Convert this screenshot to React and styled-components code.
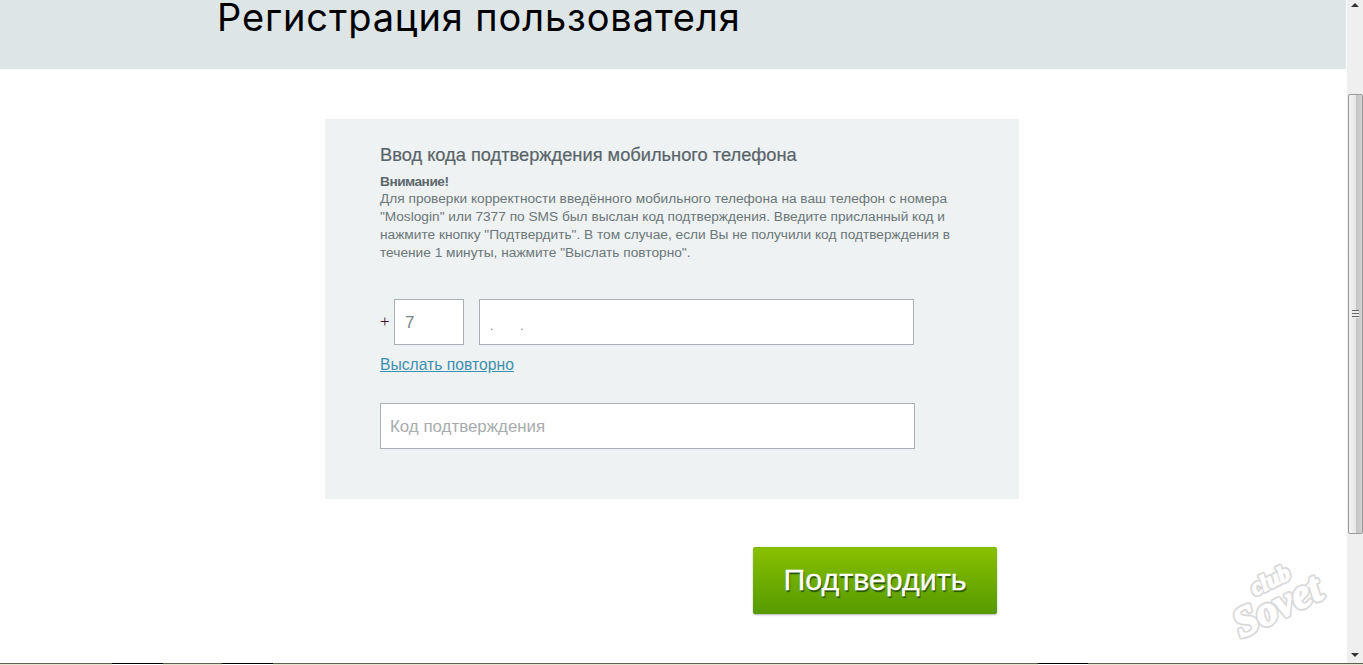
import styled, { createGlobalStyle } from "styled-components";

const GlobalStyle = createGlobalStyle`
  html, body {
    margin: 0;
    padding: 0;
    height: 665px;
    overflow: hidden;
    background: #fff;
    font-family: "Liberation Sans", Arial, sans-serif;
  }
`
const Screen = styled.div`
  width: 1363px;
  height: 665px;
  display: flex;
  flex-direction: column;
  overflow: hidden;
  position: relative;
`
const Main = styled.div`
  flex: 1;
  min-height: 0;
  display: flex;
`
const Page = styled.div`
  flex: 1;
  min-width: 0;
`
const Header = styled.div`
  height: 69px;
  margin-right: 1px;
  background: #dee5e7;
  padding-left: 217px;
  box-sizing: border-box;
`
const Title = styled.h1`
  margin: 0;
  font-family: Inter, sans-serif;
  font-weight: 400;
  font-size: 38px;
  line-height: 34px;
  letter-spacing: 0.88px;
  color: #000;
`
const Panel = styled.div`
  width: 694px;
  height: 380px;
  margin: 50px 0 0 325px;
  padding: 26px 55px 0;
  box-sizing: border-box;
  background: #eef2f3;
`
const PanelTitle = styled.h2`
  margin: 0;
  font-size: 18.25px;
  line-height: 20px;
  font-weight: 400;
  color: #596469;
  -webkit-text-stroke: 0.2px #596469;
`
const Note = styled.div`
  margin-top: 8px;
  width: 590px;
  font-size: 13.7px;
  line-height: 18px;
  color: #6c7679;
`
const Attention = styled.div`
  font-weight: 700;
  line-height: 17px;
  letter-spacing: -0.5px;
  color: #5d686c;
`
const PhoneRow = styled.div`
  display: flex;
  align-items: center;
  margin-top: 37px;
`
const Plus = styled.span`
  width: 14px;
  font-family: "Liberation Serif", serif;
  font-size: 17px;
  color: #3c1028;
`
const Field = styled.div`
  height: 46px;
  width: ${p => p.$width}px;
  margin-left: ${p => p.$gap || 0}px;
  padding: 2px 0 0 ${p => p.$pad || 10}px;
  box-sizing: border-box;
  display: flex;
  align-items: center;
  background: #fff;
  border: 1px solid #a9afb5;
  font-size: ${p => p.$size || 17}px;
  color: ${p => p.$color || "#7b8388"};
`
const Dots = styled.span`
  display: flex;
  gap: 27px;
  font-size: 12px;
  margin-top: 5px;
`
const Resend = styled.a`
  display: block;
  width: fit-content;
  margin-top: 11px;
  font-size: 15.7px;
  line-height: 18px;
  color: #3d8fae;
  text-decoration: underline;
`
const CodeBox = styled.div`
  margin-top: 29px;
`
const Actions = styled.div`
  margin: 48px 0 0 753px;
`
const Button = styled.button`
  display: block;
  width: 244px;
  height: 67px;
  padding: 0 0 4px;
  border: 0;
  border-top: 1px solid #79b800;
  border-radius: 2px;
  background: linear-gradient(#88bf00, #559a00);
  box-shadow: 0 1px 2px rgba(0, 0, 0, 0.3);
  font-family: "Liberation Sans", Arial, sans-serif;
  font-size: 30.4px;
  color: #fff;
  -webkit-text-stroke: 0.3px #fff;
  text-shadow: 1px 2px 1px rgba(20, 60, 0, 0.8);
`
const Scrollbar = styled.div`
  width: 16px;
  display: flex;
  flex-direction: column;
  align-items: center;
  background: #efefef;
`
const Arrow = styled.div`
  width: 0;
  height: 0;
  margin: ${p => p.$up ? "3px 0 0" : "auto 0 6px"};
  border-left: 4px solid transparent;
  border-right: 4px solid transparent;
  ${p => p.$up ? "border-bottom: 4px solid #333;" : "border-top: 4px solid #333;"}
`
const Thumb = styled.div`
  width: 15px;
  height: 440px;
  margin-top: 87px;
  box-sizing: border-box;
  display: flex;
  align-items: center;
  justify-content: center;
  border: 1px solid #9a9a9a;
  border-radius: 2px;
  background: linear-gradient(90deg, #f4f4f4, #e6e6e6 50%, #c4c4c4 55%, #d2d2d2);
`
const Grip = styled.div`
  width: 7px;
  height: 8px;
  background: repeating-linear-gradient(#666 0 1px, #ececec 1px 3px);
`
const Taskbar = styled.div`
  height: 2px;
  flex: none;
  display: flex;
  box-sizing: border-box;
  border-top: 1px solid #5f5f50;
  background: #e6e4cf;
`
const Tab = styled.div`
  box-sizing: content-box;
  height: 1px;
  width: ${p => p.$width}px;
  margin: -1px 0 0 ${p => p.$left}px;
  border-top: 1px solid #000;
  background: #fff;
`
const Watermark = styled.svg`
  position: absolute;
  left: 1218px;
  top: 545px;
`
const WatermarkOutline = styled.g`
  font-family: "Liberation Serif", serif;
  font-style: italic;
  font-weight: 700;
  fill: #d9d9d9;
  stroke: #d9d9d9;
  stroke-width: 5px;
  stroke-linejoin: round;
`
const WatermarkFill = styled(WatermarkOutline)`
  fill: #fff;
  stroke: #fff;
  stroke-width: 1.4px;
`
const Logo = () => (
    <Watermark width="125" height="105" viewBox="0 0 125 105">
        <g transform="rotate(-26 62 52)">
            <WatermarkOutline>
                <text x="40" y="40" fontSize="23">club</text>
                <text x="9" y="72" fontSize="42">Sovet</text>
            </WatermarkOutline>
            <WatermarkFill>
                <text x="40" y="40" fontSize="23">club</text>
                <text x="9" y="72" fontSize="42">Sovet</text>
            </WatermarkFill>
        </g>
    </Watermark>
)

const App = () => {
    return (
        <Screen>
            <GlobalStyle/>
            <Main>
                <Page>
                    <Header>
                        <Title>Регистрация пользователя</Title>
                    </Header>
                    <Panel>
                        <PanelTitle>Ввод кода подтверждения мобильного телефона</PanelTitle>
                        <Note>
                            <Attention>Внимание!</Attention>
                            Для проверки корректности введённого мобильного телефона на ваш телефон с номера
                            "Moslogin" или 7377 по SMS был выслан код подтверждения. Введите присланный код и
                            нажмите кнопку "Подтвердить". В том случае, если Вы не получили код подтверждения в
                            течение 1 минуты, нажмите "Выслать повторно".
                        </Note>
                        <PhoneRow>
                            <Plus>+</Plus>
                            <Field $width={70}>7</Field>
                            <Field $width={435} $gap={15}>
                                <Dots><span>.</span><span>.</span></Dots>
                            </Field>
                        </PhoneRow>
                        <Resend>Выслать повторно</Resend>
                        <CodeBox>
                            <Field $width={535} $pad={9} $size={16.9} $color="#a8acae">Код подтверждения</Field>
                        </CodeBox>
                    </Panel>
                    <Actions>
                        <Button>Подтвердить</Button>
                    </Actions>
                </Page>
                <Scrollbar>
                    <Arrow $up/>
                    <Thumb><Grip/></Thumb>
                    <Arrow/>
                </Scrollbar>
            </Main>
            <Taskbar>
                <Tab $left={112} $width={51}/>
                <Tab $left={59} $width={51}/>
                <Tab $left={765} $width={50}/>
            </Taskbar>
            <Logo/>
        </Screen>
    )
}
export default App;
